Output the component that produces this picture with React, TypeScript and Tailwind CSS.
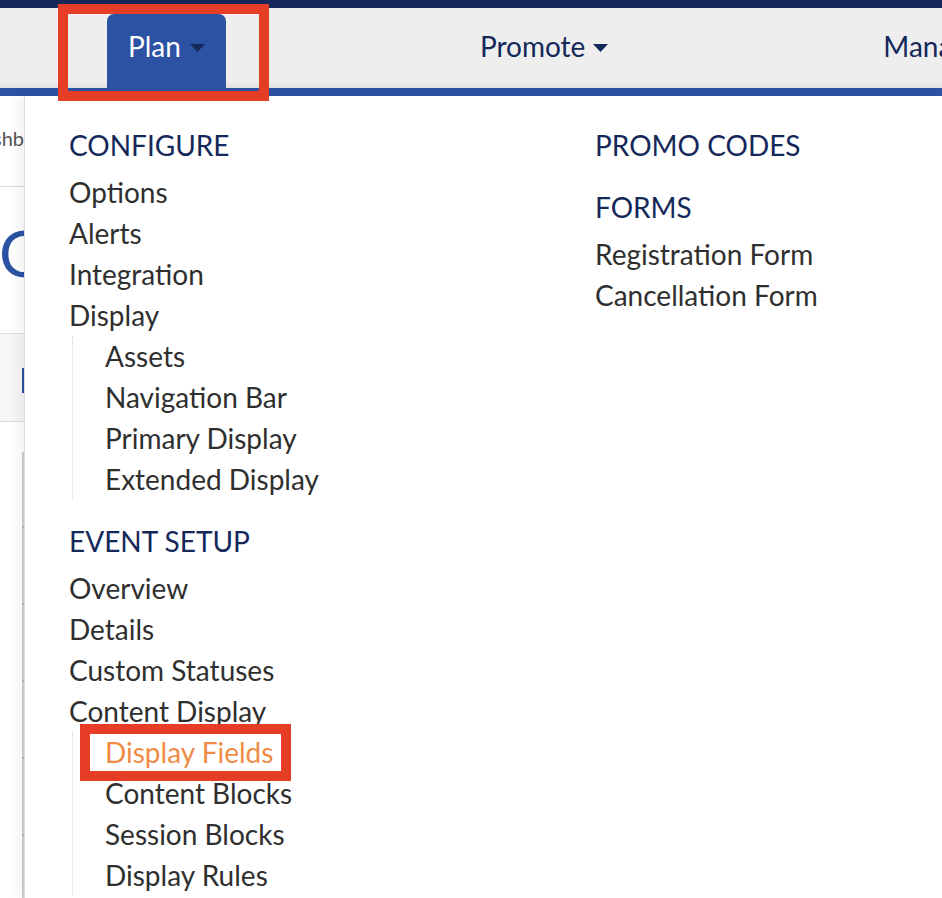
import React from "react";

const configure = ["Options", "Alerts", "Integration", "Display"];
const displaySub = ["Assets", "Navigation Bar", "Primary Display", "Extended Display"];
const eventSetup = ["Overview", "Details", "Custom Statuses", "Content Display"];
const contentSub = ["Display Fields", "Content Blocks", "Session Blocks", "Display Rules"];

function Caret({ className }: { className?: string }) {
  return (
    <svg width="15" height="8" viewBox="0 0 15 8" className={className}>
      <path d="M0 0 L15 0 L7.5 8 Z" fill="currentColor" />
    </svg>
  );
}

function Header({ children, first }: { children: React.ReactNode; first?: boolean }) {
  return (
    <h3
      className={`text-[28px] leading-[41px] text-[#14285a] mb-[6px] ${first ? "" : "mt-[21px]"}`}
    >
      {children}
    </h3>
  );
}

function Item({ label, active }: { label: string; active?: boolean }) {
  return (
    <li className={`text-[28px] leading-[41px] ${active ? "text-[#ef8b45]" : "text-[#2f2f2f]"}`}>
      {label}
    </li>
  );
}

function SubList({ items, active }: { items: string[]; active?: string }) {
  return (
    <ul className="ml-[3px] pl-[32px] border-l border-dotted border-[#d4d4d4]">
      {items.map((i) => (
        <Item key={i} label={i} active={i === active} />
      ))}
    </ul>
  );
}

export default function App() {
  return (
    <div className="relative w-[942px] h-[898px] overflow-hidden bg-white font-['Lato','Open_Sans',sans-serif]">
      {/* top bars */}
      <div className="h-2 bg-[#14285a]" />
      <nav className="h-20 bg-[#eeeeee] flex items-end pl-[107px] gap-[233px] shadow-[inset_0_-6px_8px_-6px_rgba(0,0,0,0.12)]">
        <div className="h-[74px] px-[21px] flex items-center gap-[9px] rounded-t-[7px] bg-[#2b52a3] text-white text-[28px] pb-[10px]">
          Plan
          <Caret className="text-[#14285a] mt-[3px]" />
        </div>
        <div className="h-[74px] px-[21px] flex items-center gap-[8px] text-[#14285a] text-[28px] pb-[10px]">
          Promote
          <Caret className="mt-[3px]" />
        </div>
        <div className="h-[74px] px-[21px] flex items-center text-[#14285a] text-[28px] pb-[10px] whitespace-nowrap">
          Manage
        </div>
      </nav>
      <div className="h-2 bg-[#2b52a3]" />

      {/* page behind the menu */}
      <div className="w-[24px] overflow-hidden flex flex-col">
        <div className="h-[91px] flex items-center justify-end border-b border-[#dddddd] pb-[6px]">
          <span className="text-[20px] text-[#555555] whitespace-nowrap">Dashb</span>
        </div>
        <div className="h-[146px] flex items-center">
          <span className="text-[64px] leading-none text-[#2b52a3] -ml-[1px] pb-[14px]">O</span>
        </div>
        <div className="h-[89px] bg-[#f6f6f6] border-y border-[#dddddd] flex items-center justify-end">
          <div className="w-[2px] h-[25px] bg-[#2b52a3] mb-[-5px]" />
        </div>
        <div className="h-[30px]" />
        <div className="ml-[22px] w-[2px] h-[446px] bg-[#d0d0d0] flex flex-col gap-[75px] pt-[74px]">
          {[0, 1, 2, 3, 4].map((t) => (
            <div key={t} className="h-[2px] w-[2px] bg-[#b5b5b5]" />
          ))}
        </div>
      </div>

      {/* dropdown menu */}
      <div className="absolute left-[24px] top-[96px] right-0 bottom-0 bg-white border-l border-[#dedede] shadow-[-6px_0_10px_rgba(0,0,0,0.05)] flex pl-[44px] pt-[29px]">
        <div className="w-[526px]">
          <Header first>CONFIGURE</Header>
          <ul>
            {configure.map((i) => (
              <Item key={i} label={i} />
            ))}
          </ul>
          <SubList items={displaySub} />
          <Header>EVENT SETUP</Header>
          <ul>
            {eventSetup.map((i) => (
              <Item key={i} label={i} />
            ))}
          </ul>
          <SubList items={contentSub} active="Display Fields" />
        </div>
        <div>
          <Header first>PROMO CODES</Header>
          <Header>FORMS</Header>
          <ul>
            <Item label="Registration Form" />
            <Item label="Cancellation Form" />
          </ul>
        </div>
      </div>

      {/* red annotation boxes */}
      <div className="absolute left-[58px] top-[4px] w-[211px] h-[97px] border-[10px] border-[#e63e26]" />
      <div className="absolute left-[80px] top-[724px] w-[211px] h-[57px] border-[10px] border-[#e63e26]" />
    </div>
  );
}
